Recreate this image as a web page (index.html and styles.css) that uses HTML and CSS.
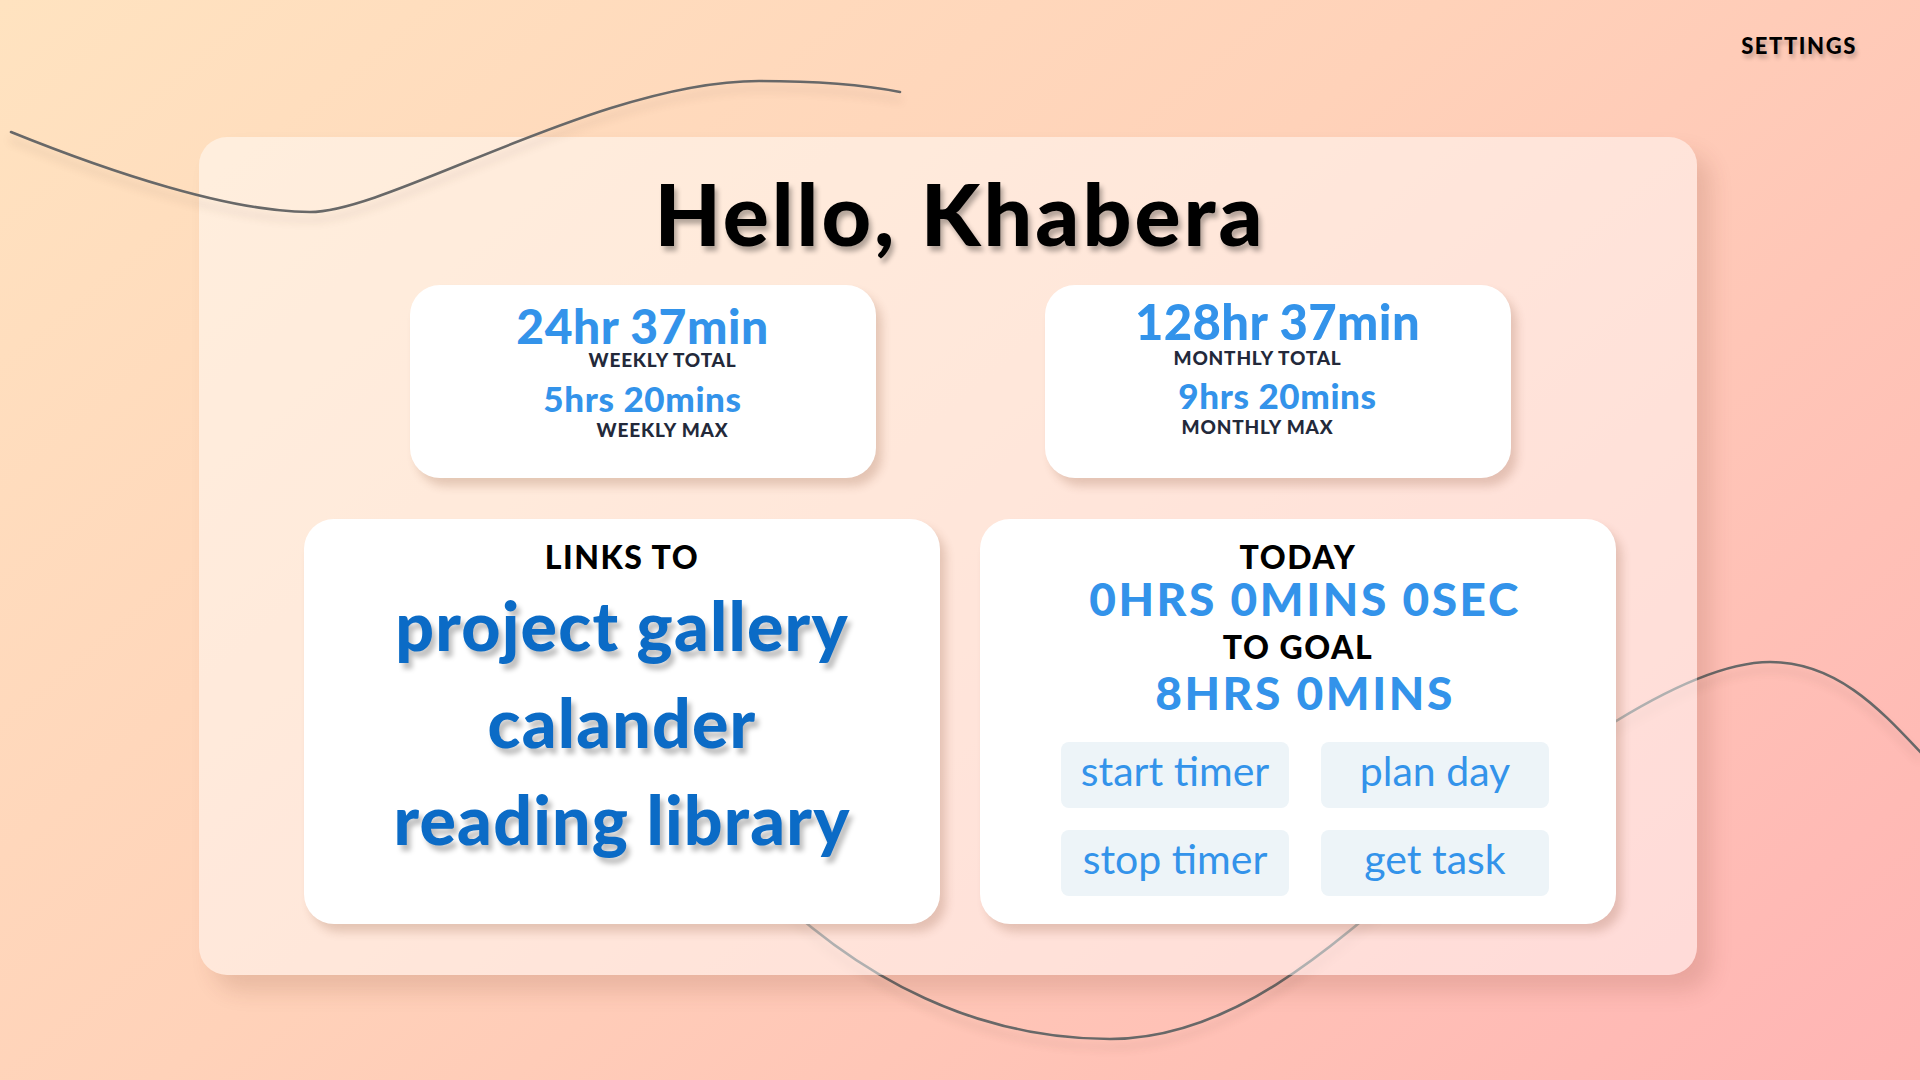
FILE: index.html
```html
<!DOCTYPE html>
<html lang="en">
<head>
<meta charset="utf-8">
<title>Dashboard</title>
<link rel="stylesheet" href="styles.css">
</head>
<body>
<svg class="waves waves-back" width="1920" height="1080" viewBox="0 0 1920 1080" aria-hidden="true">
  <path d="M740,860 C860,990 990,1039 1110,1039 C1230,1039 1330,950 1420,870 C1528,774 1680,662 1770,662 C1840,662 1885,715 1925,757" />
</svg>
<header class="topbar">
  <a class="settings" href="#">SETTINGS</a>
</header>
<main class="panel">
  <h1 class="greeting">Hello, Khabera</h1>
  <section class="stats">
    <div class="stat-card stat-week">
      <div class="stat-big">24hr 37min</div>
      <div class="stat-label">WEEKLY TOTAL</div>
      <div class="stat-mid">5hrs 20mins</div>
      <div class="stat-label stat-label-2">WEEKLY MAX</div>
    </div>
    <div class="stat-card stat-month">
      <div class="stat-big">128hr 37min</div>
      <div class="stat-label">MONTHLY TOTAL</div>
      <div class="stat-mid">9hrs 20mins</div>
      <div class="stat-label stat-label-2">MONTHLY MAX</div>
    </div>
  </section>
  <section class="lower">
    <div class="card links-card">
      <div class="card-head">LINKS TO</div>
      <nav class="links">
        <a href="#">project gallery</a>
        <a href="#">calander</a>
        <a href="#">reading library</a>
      </nav>
    </div>
    <div class="card today-card">
      <div class="card-head">TODAY</div>
      <div class="today-value">0HRS 0MINS 0SEC</div>
      <div class="card-head goal-head">TO GOAL</div>
      <div class="today-value goal-value">8HRS 0MINS</div>
      <div class="actions">
        <button class="action" type="button">start timer</button>
        <button class="action" type="button">plan day</button>
        <button class="action" type="button">stop timer</button>
        <button class="action" type="button">get task</button>
      </div>
    </div>
  </section>
</main>
<svg class="waves waves-front" width="1920" height="1080" viewBox="0 0 1920 1080" aria-hidden="true">
  <path d="M11,132 C110,172 230,212 310,212 C390,212 600,81 759,81 C820,81 870,86 900,92" />
</svg>
</body>
</html>
```
FILE: styles.css
```css
html, body {
  margin: 0;
  padding: 0;
}

body {
  position: relative;
  width: 1920px;
  height: 1080px;
  overflow: hidden;
  font-family: "Lato", "Liberation Sans", sans-serif;
  background: linear-gradient(140deg, #ffe3c0 0%, #ffd2b9 45%, #ffb4b4 100%);
}

.waves {
  position: absolute;
  left: 0;
  top: 0;
  pointer-events: none;
  filter: drop-shadow(0 8px 4px rgba(60, 30, 20, 0.16));
}

.waves path {
  fill: none;
  stroke: #686868;
  stroke-width: 2.6;
  stroke-linecap: round;
}

.waves-back { z-index: 0; }
.waves-front { z-index: 3; }

.topbar {
  position: relative;
  z-index: 2;
  height: 137px;
  box-sizing: border-box;
  display: flex;
  justify-content: flex-end;
  align-items: flex-start;
  padding: 35px 63px 0 0;
}

.settings {
  font-size: 22px;
  font-weight: 900;
  letter-spacing: 1.6px;
  line-height: 1;
  color: #000;
  text-decoration: none;
  text-shadow: 2px 4px 4px rgba(0, 0, 0, 0.25);
}

.panel {
  position: relative;
  z-index: 1;
  margin-left: 199px;
  width: 1498px;
  height: 838px;
  box-sizing: border-box;
  padding: 33px 81px 0 105px;
  border-radius: 28px;
  background: rgba(255, 255, 255, 0.48);
  box-shadow: 14px 16px 22px rgba(110, 50, 30, 0.15);
}

.greeting {
  margin: 0;
  text-align: center;
  font-size: 86px;
  font-weight: 900;
  letter-spacing: 3px;
  line-height: 1;
  color: #000;
  text-shadow: 3px 5px 5px rgba(0, 0, 0, 0.3);
}

.stats {
  margin-top: 29px;
  display: flex;
  justify-content: center;
  gap: 169px;
}

.stat-card {
  width: 466px;
  height: 193px;
  box-sizing: border-box;
  border-radius: 30px;
  background: #fff;
  box-shadow: 6px 8px 10px rgba(120, 60, 30, 0.2);
  display: flex;
  flex-direction: column;
  align-items: center;
  padding-top: 22px;
  line-height: 0.8;
}

.stat-big {
  font-size: 48px;
  font-weight: 900;
  letter-spacing: 0.5px;
  color: #3393ea;
}

.stat-mid {
  margin-top: 16px;
  font-size: 35px;
  font-weight: 900;
  letter-spacing: 0.6px;
  color: #3393ea;
}

.stat-label {
  margin-top: 7px;
  font-size: 19px;
  font-weight: 900;
  letter-spacing: 0.8px;
  color: #23293a;
}

.stat-label-2 {
  margin-top: 10px;
}

.stat-week .stat-label { padding-left: 40px; }
.stat-month .stat-label { padding-right: 40px; }

.stat-month { padding-top: 17px; }
.stat-month .stat-big { font-size: 49px; letter-spacing: 0.4px; }
.stat-month .stat-label:not(.stat-label-2) { margin-top: 9px; }

.lower {
  margin-top: 41px;
  display: grid;
  grid-template-columns: 636px 636px;
  gap: 40px;
}

.card {
  height: 405px;
  box-sizing: border-box;
  border-radius: 30px;
  background: #fff;
  box-shadow: 6px 8px 10px rgba(120, 60, 30, 0.2);
  display: flex;
  flex-direction: column;
  align-items: center;
  padding-top: 25px;
  line-height: 0.8;
}

.card-head {
  font-size: 32px;
  font-weight: 900;
  letter-spacing: 1.5px;
  color: #000;
}

.links {
  margin-top: 6px;
  display: flex;
  flex-direction: column;
  align-items: center;
}

.links a {
  font-size: 68px;
  font-weight: 900;
  letter-spacing: 1.2px;
  line-height: 97px;
  color: #0b6bc6;
  text-decoration: none;
  text-shadow: 4px 6px 5px rgba(0, 0, 0, 0.25);
}

.today-value {
  margin-top: 11px;
  padding-left: 14px;
  font-size: 46px;
  font-weight: 900;
  letter-spacing: 2.6px;
  color: #3393ea;
}

.goal-head { margin-top: 17px; }
.goal-value { margin-top: 15px; }

.actions {
  margin-top: 30px;
  margin-left: 14px;
  display: grid;
  grid-template-columns: 228px 228px;
  column-gap: 32px;
  row-gap: 22px;
}

.action {
  height: 66px;
  border: none;
  border-radius: 8px;
  background: #edf4f8;
  font-family: "Lato", "Liberation Sans", sans-serif;
  font-size: 41px;
  font-weight: 400;
  line-height: 1;
  color: #3393ea;
  padding: 0 0 8px;
  cursor: pointer;
}
```
